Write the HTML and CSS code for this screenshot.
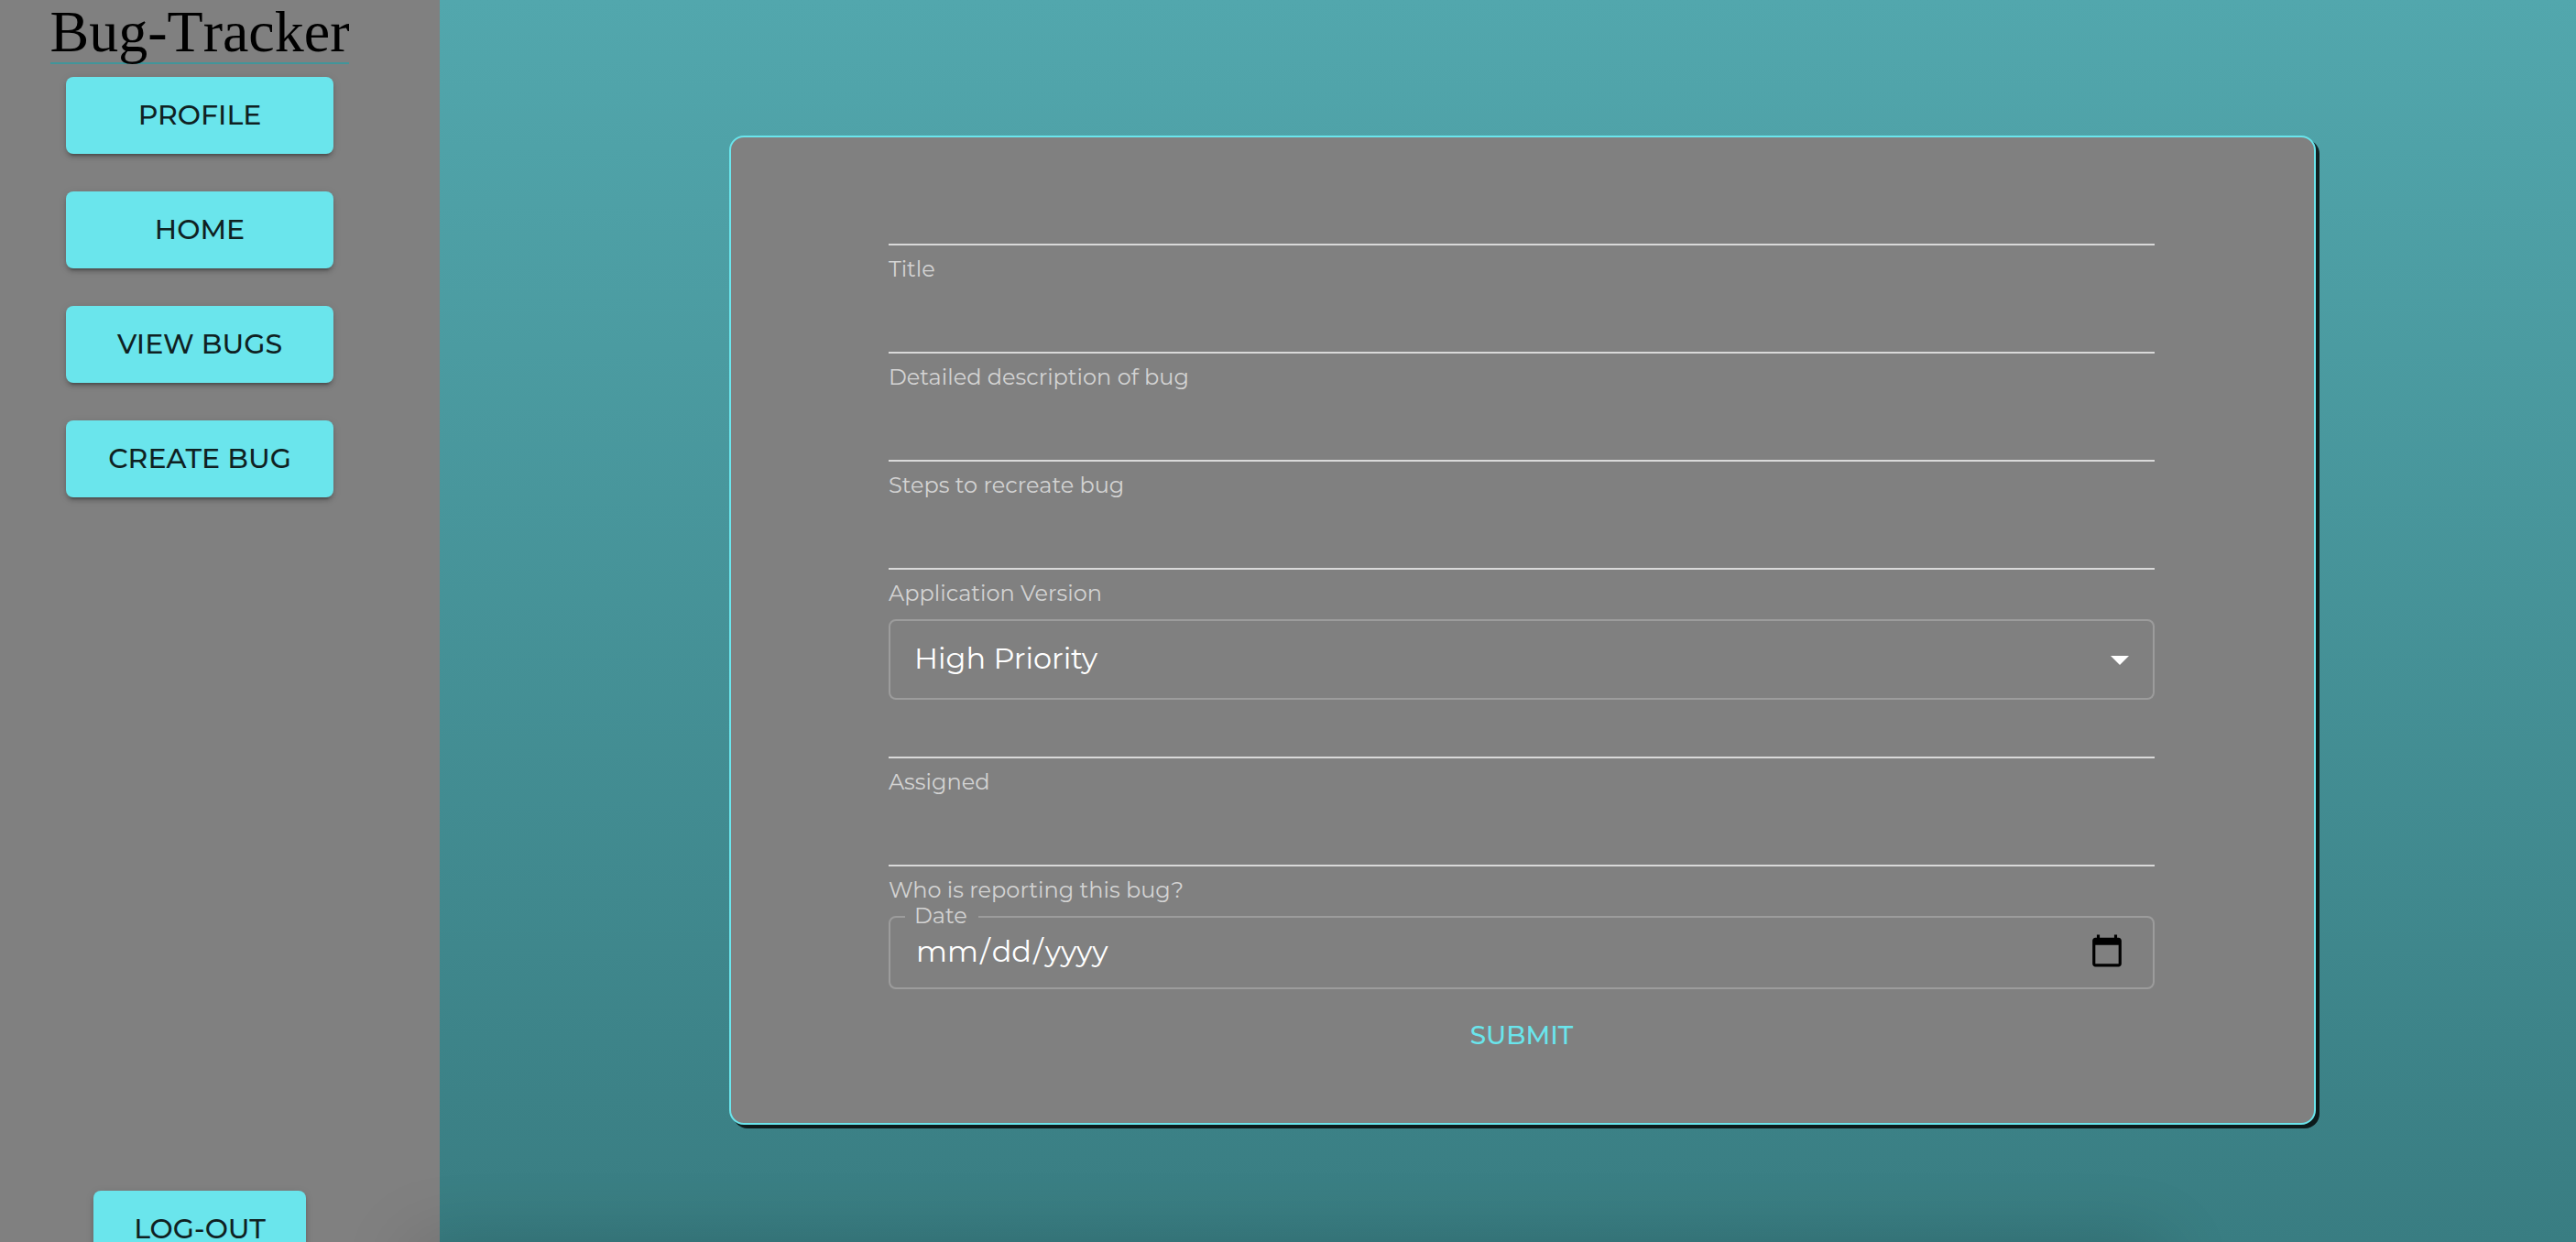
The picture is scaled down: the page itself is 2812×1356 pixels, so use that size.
FILE: index.html
```html
<!DOCTYPE html>
<html lang="en">
<head>
<meta charset="utf-8">
<title>Bug-Tracker</title>
<link rel="stylesheet" href="styles.css">
</head>
<body>
<div class="app">
  <aside class="sidebar">
    <h1 class="brand">Bug-Tracker</h1>
    <nav class="menu">
      <button class="btn" type="button">PROFILE</button>
      <button class="btn" type="button">HOME</button>
      <button class="btn" type="button">VIEW BUGS</button>
      <button class="btn" type="button">CREATE BUG</button>
    </nav>
    <button class="btn btn-logout" type="button">LOG-OUT</button>
  </aside>
  <main class="main">
    <form class="card">
      <div class="field">
        <input class="line-input" id="title" type="text">
        <label class="helper" for="title">Title</label>
      </div>
      <div class="field">
        <input class="line-input" id="description" type="text">
        <label class="helper" for="description">Detailed description of bug</label>
      </div>
      <div class="field">
        <input class="line-input" id="steps" type="text">
        <label class="helper" for="steps">Steps to recreate bug</label>
      </div>
      <div class="field">
        <input class="line-input" id="version" type="text">
        <label class="helper" for="version">Application Version</label>
      </div>
      <div class="select-wrap">
        <select class="select" aria-label="Priority">
          <option>High Priority</option>
          <option>Medium Priority</option>
          <option>Low Priority</option>
        </select>
        <svg class="arrow" viewBox="0 0 20 10" aria-hidden="true"><path d="M0 0h20L10 10z"/></svg>
      </div>
      <div class="field">
        <input class="line-input" id="assigned" type="text">
        <label class="helper" for="assigned">Assigned</label>
      </div>
      <div class="field">
        <input class="line-input" id="reporter" type="text">
        <label class="helper" for="reporter">Who is reporting this bug?</label>
      </div>
      <div class="date-wrap">
        <label class="date-label" for="date">Date</label>
        <input class="date" id="date" type="date">
      </div>
      <button class="submit" type="submit">SUBMIT</button>
    </form>
  </main>
</div>
</body>
</html>
```
FILE: styles.css
```css
* {
  box-sizing: border-box;
}

body {
  margin: 0;
  font-family: Montserrat, Inter, "Open Sans", sans-serif;
}

.app {
  position: relative;
  display: flex;
  height: 100vh;
  overflow: hidden;
}

/* soft shade rising from the bottom edge of the window */
.app::after {
  content: "";
  position: absolute;
  top: 100%;
  left: 16%;
  right: 16%;
  height: 80px;
  box-shadow: 0 0 80px rgba(0, 0, 0, 0.16);
  pointer-events: none;
}

.sidebar {
  flex: none;
  display: flex;
  flex-direction: column;
  width: 480px;
  padding-right: 44px;
  align-items: center;
  background: #808080;
}

.brand {
  margin: 0 0 14px;
  padding-top: 2px;
  border-bottom: 2px solid #41959a;
  font: 400 64px/66px "Liberation Serif", serif;
  font-kerning: none;
  color: #000;
}

.menu {
  display: flex;
  flex-direction: column;
  gap: 41px;
  width: 292px;
  margin-bottom: auto;
}

.btn {
  flex: none;
  height: 84px;
  padding: 0 32px;
  border: 0;
  border-radius: 8px;
  background: #6ae5ec;
  box-shadow: 0 6px 2px -4px rgba(0, 0, 0, 0.2), 0 4px 4px rgba(0, 0, 0, 0.14), 0 2px 10px rgba(0, 0, 0, 0.12);
  font: 500 30px/52px Montserrat, Inter, "Open Sans", sans-serif;
  color: #0f2122;
}

/* the log-out button hangs partly below the window edge */
.btn-logout {
  width: 232px;
  margin-bottom: -28px;
}

.main {
  flex: 1;
  padding: 148px 284px 0 316px;
  background: linear-gradient(#52a7ad, #397d82);
}

.card {
  display: flex;
  flex-direction: column;
  gap: 8px;
  padding: 54px 174px 54px 172px;
  border: 2px solid #6ae5ec;
  border-radius: 16px;
  background: #808080;
  box-shadow: 4px 4px 0 rgba(0, 0, 0, 0.8);
}

.field {
  display: flex;
  flex-direction: column;
  gap: 6px;
}

.line-input {
  height: 64px;
  padding: 8px 0 10px;
  border: 0;
  border-bottom: 2px solid #d9d9d9;
  outline: 0;
  background: none;
  font: 400 32px/46px Montserrat, Inter, "Open Sans", sans-serif;
  color: #fff;
}

.helper {
  font-size: 24px;
  line-height: 40px;
  color: #d3d3d3;
}

.select-wrap {
  position: relative;
  margin-bottom: -8px;
}

.select {
  display: block;
  width: 100%;
  height: 88px;
  padding: 0 64px 2px 26px;
  border: 2px solid #9c9c9c;
  border-radius: 8px;
  appearance: none;
  background: none;
  font: 400 32px/46px Montserrat, Inter, "Open Sans", sans-serif;
  color: #fff;
}

.arrow {
  position: absolute;
  top: 40px;
  right: 28px;
  width: 20px;
  height: 10px;
  fill: #fff;
  pointer-events: none;
}

.date-wrap {
  position: relative;
}

.date-label {
  position: absolute;
  top: -12px;
  left: 18px;
  padding: 0 12px 0 10px;
  background: #808080;
  font-size: 24px;
  line-height: 24px;
  color: #d3d3d3;
}

.date {
  display: block;
  width: 100%;
  height: 80px;
  padding: 0 26px 2px;
  border: 2px solid #9c9c9c;
  border-radius: 8px;
  background: none;
  font: 400 32px/46px Montserrat, Inter, "Open Sans", sans-serif;
  color: #fff;
}

.date::-webkit-datetime-edit-month-field,
.date::-webkit-datetime-edit-day-field,
.date::-webkit-datetime-edit-year-field {
  padding: 0 2px;
}

.date::-webkit-calendar-picker-indicator {
  width: 40px;
  height: 40px;
  padding: 4px;
  box-sizing: content-box;
}

.submit {
  height: 84px;
  border: 0;
  background: none;
  font: 500 28px/52px Montserrat, Inter, "Open Sans", sans-serif;
  color: #6ae5ec;
}
```
